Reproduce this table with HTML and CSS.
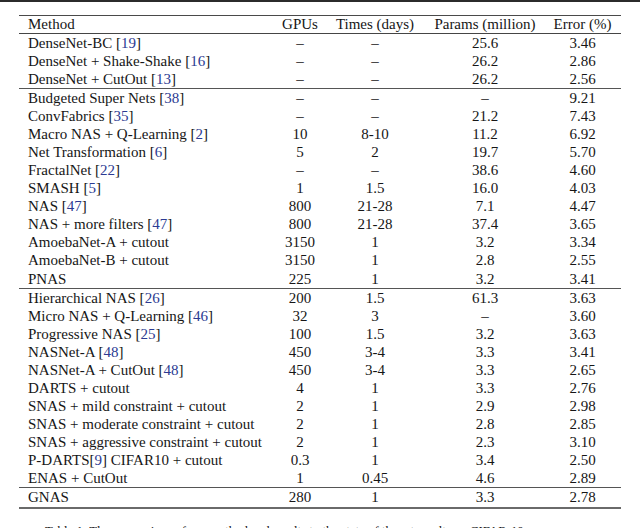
FILE: index.html
```html
<!DOCTYPE html>
<html>
<head>
<meta charset="utf-8">
<link rel="stylesheet" href="styles.css">
</head>
<body>
<div class="band"></div>
<div class="tbl">
  <div class="row head"><span>Method</span><span>GPUs</span><span>Times (days)</span><span>Params (million)</span><span>Error (%)</span></div>
  <div class="group">
    <div class="row"><span>DenseNet-BC [<span class="cite">19</span>]</span><span>–</span><span>–</span><span>25.6</span><span>3.46</span></div>
    <div class="row"><span>DenseNet + Shake-Shake [<span class="cite">16</span>]</span><span>–</span><span>–</span><span>26.2</span><span>2.86</span></div>
    <div class="row"><span>DenseNet + CutOut [<span class="cite">13</span>]</span><span>–</span><span>–</span><span>26.2</span><span>2.56</span></div>
  </div>
  <div class="group">
    <div class="row"><span>Budgeted Super Nets [<span class="cite">38</span>]</span><span>–</span><span>–</span><span>–</span><span>9.21</span></div>
    <div class="row"><span>ConvFabrics [<span class="cite">35</span>]</span><span>–</span><span>–</span><span>21.2</span><span>7.43</span></div>
    <div class="row"><span>Macro NAS + Q-Learning [<span class="cite">2</span>]</span><span>10</span><span>8-10</span><span>11.2</span><span>6.92</span></div>
    <div class="row"><span>Net Transformation [<span class="cite">6</span>]</span><span>5</span><span>2</span><span>19.7</span><span>5.70</span></div>
    <div class="row"><span>FractalNet [<span class="cite">22</span>]</span><span>–</span><span>–</span><span>38.6</span><span>4.60</span></div>
    <div class="row"><span>SMASH [<span class="cite">5</span>]</span><span>1</span><span>1.5</span><span>16.0</span><span>4.03</span></div>
    <div class="row"><span>NAS [<span class="cite">47</span>]</span><span>800</span><span>21-28</span><span>7.1</span><span>4.47</span></div>
    <div class="row"><span>NAS + more filters [<span class="cite">47</span>]</span><span>800</span><span>21-28</span><span>37.4</span><span>3.65</span></div>
    <div class="row"><span>AmoebaNet-A + cutout</span><span>3150</span><span>1</span><span>3.2</span><span>3.34</span></div>
    <div class="row"><span>AmoebaNet-B + cutout</span><span>3150</span><span>1</span><span>2.8</span><span>2.55</span></div>
    <div class="row"><span>PNAS</span><span>225</span><span>1</span><span>3.2</span><span>3.41</span></div>
  </div>
  <div class="group">
    <div class="row"><span>Hierarchical NAS [<span class="cite">26</span>]</span><span>200</span><span>1.5</span><span>61.3</span><span>3.63</span></div>
    <div class="row"><span>Micro NAS + Q-Learning [<span class="cite">46</span>]</span><span>32</span><span>3</span><span>–</span><span>3.60</span></div>
    <div class="row"><span>Progressive NAS [<span class="cite">25</span>]</span><span>100</span><span>1.5</span><span>3.2</span><span>3.63</span></div>
    <div class="row"><span>NASNet-A [<span class="cite">48</span>]</span><span>450</span><span>3-4</span><span>3.3</span><span>3.41</span></div>
    <div class="row"><span>NASNet-A + CutOut [<span class="cite">48</span>]</span><span>450</span><span>3-4</span><span>3.3</span><span>2.65</span></div>
    <div class="row"><span>DARTS + cutout</span><span>4</span><span>1</span><span>3.3</span><span>2.76</span></div>
    <div class="row"><span>SNAS + mild constraint + cutout</span><span>2</span><span>1</span><span>2.9</span><span>2.98</span></div>
    <div class="row"><span>SNAS + moderate constraint + cutout</span><span>2</span><span>1</span><span>2.8</span><span>2.85</span></div>
    <div class="row"><span>SNAS + aggressive constraint + cutout</span><span>2</span><span>1</span><span>2.3</span><span>3.10</span></div>
    <div class="row"><span>P-DARTS[<span class="cite">9</span>] CIFAR10 + cutout</span><span>0.3</span><span>1</span><span>3.4</span><span>2.50</span></div>
    <div class="row"><span>ENAS + CutOut</span><span>1</span><span>0.45</span><span>4.6</span><span>2.89</span></div>
  </div>
  <div class="group">
    <div class="row"><span>GNAS</span><span>280</span><span>1</span><span>3.3</span><span>2.78</span></div>
  </div>
</div>
<p class="caption">Table 1: The comparison of our method and results to the state of the art results on CIFAR-10</p>
</body>
</html>
```

FILE: styles.css
```css
html, body {
  margin: 0;
  padding: 0;
  background: #ffffff;
}

body {
  font-family: "Liberation Serif", "Times New Roman", serif;
  color: #161616;
  width: 640px;
  height: 528px;
  overflow: hidden;
}

.band {
  height: 2px;
  background: #2b2b2b;
}

.tbl {
  margin: 13px 0 0 19px;
  width: 602px;
  border-top: 1.5px solid #4a4a4a;
  border-bottom: 2px solid #6a6a6a;
}

.row {
  display: grid;
  grid-template-columns: 257px 48px 102px 118px 77px;
  height: 18.08px;
  line-height: 18.08px;
  font-size: 15px;
  white-space: nowrap;
}

.row > span {
  text-align: center;
}

.row > span:first-child {
  text-align: left;
  padding-left: 9px;
}

.head {
  height: 16.5px;
  line-height: 16.5px;
  border-bottom: 1px solid #454545;
}

.group + .group {
  border-top: 1px solid #555555;
}

.cite {
  color: #2b3a92;
}

.caption {
  margin: 13px 0 0 45px;
  font-size: 12.8px;
  line-height: 18px;
  white-space: nowrap;
}
```
